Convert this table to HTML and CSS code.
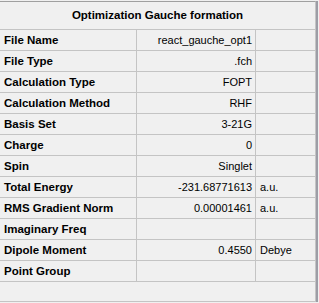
FILE: index.html
```html
<!DOCTYPE html>
<html>
<head>
<meta charset="utf-8">
<link rel="stylesheet" href="styles.css">
</head>
<body>
<div class="panel">
  <div class="grid">
    <div class="title">Optimization Gauche formation</div>
    <div class="row"><div class="label">File Name</div><div class="value">react_gauche_opt1</div><div class="unit"></div></div>
    <div class="row"><div class="label">File Type</div><div class="value">.fch</div><div class="unit"></div></div>
    <div class="row"><div class="label">Calculation Type</div><div class="value">FOPT</div><div class="unit"></div></div>
    <div class="row"><div class="label">Calculation Method</div><div class="value">RHF</div><div class="unit"></div></div>
    <div class="row"><div class="label">Basis Set</div><div class="value">3-21G</div><div class="unit"></div></div>
    <div class="row"><div class="label">Charge</div><div class="value">0</div><div class="unit"></div></div>
    <div class="row"><div class="label">Spin</div><div class="value">Singlet</div><div class="unit"></div></div>
    <div class="row"><div class="label">Total Energy</div><div class="value">-231.68771613</div><div class="unit">a.u.</div></div>
    <div class="row"><div class="label">RMS Gradient Norm</div><div class="value">0.00001461</div><div class="unit">a.u.</div></div>
    <div class="row"><div class="label">Imaginary Freq</div><div class="value"></div><div class="unit"></div></div>
    <div class="row"><div class="label">Dipole Moment</div><div class="value">0.4550</div><div class="unit">Debye</div></div>
    <div class="row"><div class="label">Point Group</div><div class="value"></div><div class="unit"></div></div>
    <div class="filler"></div>
  </div>
</div>
</body>
</html>
```

FILE: styles.css
```css
html, body {
  margin: 0;
  padding: 0;
  background: #f0f0f0;
}

body {
  padding-top: 1px;
  font-family: "Liberation Sans", Arial, sans-serif;
  font-size: 11px;
  color: #000;
}

.panel {
  width: 316px;
  border-right: 2px solid #9d9da6;
}

.grid {
  width: 315px;
  border-top: 1px solid #a0a0a0;
  border-right: 1px solid #c4c4c4;
  border-bottom: 1px solid #c4c4c4;
}

.title {
  height: 27px;
  line-height: 27px;
  text-align: center;
  font-weight: bold;
  font-size: 11.5px;
}

.row {
  display: grid;
  grid-template-columns: 136px 119px 60px;
  border-top: 1px solid #c4c4c4;
  height: 20px;
  line-height: 20px;
}

.label {
  padding-left: 4px;
  font-weight: bold;
  font-size: 11.5px;
  white-space: nowrap;
}

.value {
  border-left: 1px solid #c4c4c4;
  text-align: right;
  padding-right: 3px;
  white-space: nowrap;
}

.unit {
  border-left: 1px solid #c4c4c4;
  padding-left: 4px;
  white-space: nowrap;
}

.filler {
  border-top: 1px solid #c4c4c4;
  height: 19px;
}
```
